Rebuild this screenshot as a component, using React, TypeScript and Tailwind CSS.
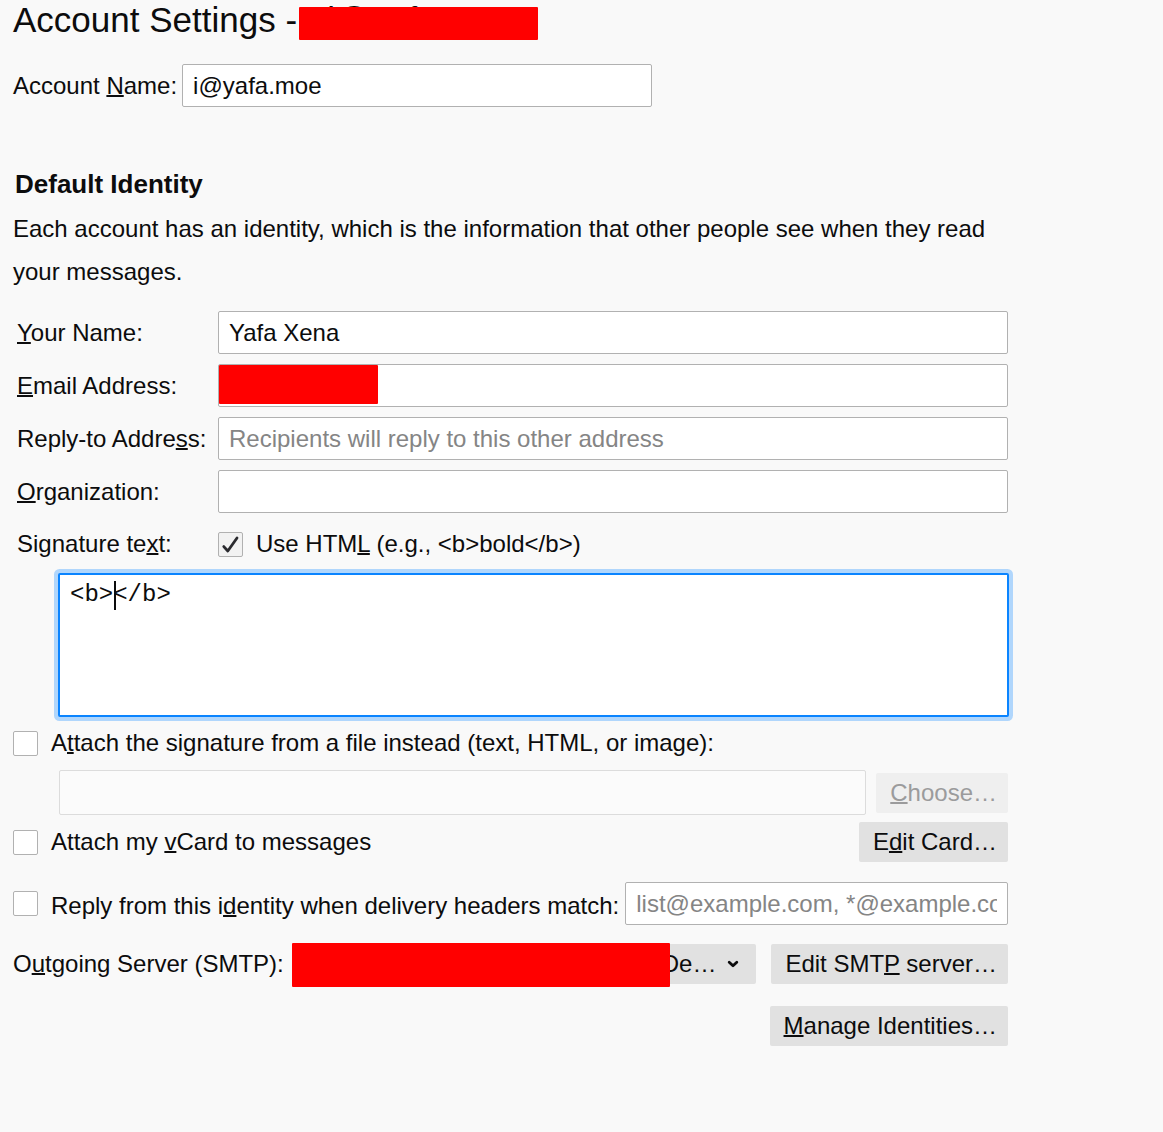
import { useRef, useEffect, type ReactNode, type InputHTMLAttributes } from "react";

const field =
  "block h-[43px] min-w-0 rounded-[2px] border border-[#b1b1b1] bg-white px-2.5 text-[#0c0c0d] placeholder:text-[#858585] outline-none";
const button =
  "h-10 shrink-0 whitespace-nowrap rounded-[2px] bg-[#e1e1e1] pl-3.5 pr-[11px] text-[#0c0c0d] disabled:bg-[#efefef] disabled:text-[#9b9b9c]";

function Key({ children }: { children: ReactNode }) {
  return (
    <span className="underline decoration-2 underline-offset-1 [text-decoration-skip-ink:none]">
      {children}
    </span>
  );
}

function Check({ className = "", ...props }: InputHTMLAttributes<HTMLInputElement>) {
  return (
    <span className={`relative block size-[25px] shrink-0 ${className}`}>
      <input
        type="checkbox"
        className="peer block size-[25px] appearance-none rounded-[2px] border border-[#b1b1b1] bg-white checked:bg-[#f2f2f2]"
        {...props}
      />
      <svg
        viewBox="0 0 25 25"
        className="pointer-events-none absolute inset-0 hidden size-[25px] peer-checked:block"
        fill="none"
        stroke="#2a2a2e"
        strokeWidth="2.8"
        strokeLinecap="round"
        strokeLinejoin="round"
      >
        <path d="M5.8 14.6 L9.8 19 L19 6" />
      </svg>
    </span>
  );
}

export default function App() {
  const signature = useRef<HTMLTextAreaElement>(null);
  useEffect(() => {
    signature.current?.setSelectionRange(3, 3);
  }, []);

  return (
    <main className="min-h-screen bg-[#f9f9f9] pl-[13px] pr-4 font-['Liberation_Sans',Arial,sans-serif] text-[24px] leading-[28px] text-[#0c0c0d]">
      <form className="w-full max-w-[995px]" onSubmit={(e) => e.preventDefault()}>
        <h1 className="relative h-10 whitespace-pre text-[35px] leading-10">
          Account Settings - &lt;i@yafa.moe&gt;
          <span className="absolute left-[286px] top-[7px] h-[33px] w-[239px] rounded-[1px] bg-[#ff0000]" />
        </h1>

        <div className="mt-6 flex items-center gap-[5px]">
          <label htmlFor="account">
            Account <Key>N</Key>ame:
          </label>
          <input id="account" className={`${field} w-[470px]`} defaultValue="i@yafa.moe" />
        </div>

        <h2 className="mt-[63px] pl-0.5 text-[26px] font-bold leading-7">Default Identity</h2>
        <p className="mt-[9px] leading-[43px]">
          Each account has an identity, which is the information that other people see when they read your
          messages.
        </p>

        <div className="mt-[18px] grid grid-cols-[201px_1fr] items-center gap-x-1 gap-y-2.5">
          <label htmlFor="name" className="pl-1">
            <Key>Y</Key>our Name:
          </label>
          <input id="name" className={`${field} w-full`} defaultValue="Yafa Xena" />

          <label htmlFor="email" className="pl-1">
            <Key>E</Key>mail Address:
          </label>
          <div className="relative">
            <input id="email" type="email" className={`${field} w-full`} />
            <span className="absolute left-px top-px h-[39px] w-[159px] rounded-[1px] bg-[#ff0000]" />
          </div>

          <label htmlFor="reply" className="whitespace-nowrap pl-1">
            Reply-to Addre<Key>s</Key>s:
          </label>
          <input
            id="reply"
            className={`${field} w-full`}
            placeholder="Recipients will reply to this other address"
          />

          <label htmlFor="org" className="pl-1">
            <Key>O</Key>rganization:
          </label>
          <input id="org" className={`${field} w-full`} />
        </div>

        <div className="mt-[17px] grid grid-cols-[201px_1fr] items-center gap-x-1">
          <label htmlFor="signature" className="pl-1">
            Signature te<Key>x</Key>t:
          </label>
          <div className="flex items-center gap-[13px]">
            <Check id="html" defaultChecked />
            <label htmlFor="html">
              Use HTM<Key>L</Key> (e.g., &lt;b&gt;bold&lt;/b&gt;)
            </label>
          </div>
        </div>

        <div className="relative -mr-px ml-[45px] mt-[15px]">
          <textarea
            id="signature"
            ref={signature}
            className="block h-36 w-full resize-none rounded-[2px] border-2 border-[#0a84ff] bg-white px-2.5 py-1.5 font-['Liberation_Mono','Courier_New',monospace] text-[24px] leading-[28px] shadow-[0_0_0_4px_#b0d6fc] outline-none"
            defaultValue="<b></b>"
          />
          <span className="absolute left-14 top-2 h-[29px] w-0.5 bg-[#0c0c0d]" />
        </div>

        <div className="mt-3 flex items-center gap-[13px]">
          <Check id="file" />
          <label htmlFor="file">
            A<Key>t</Key>tach the signature from a file instead (text, HTML, or image):
          </label>
        </div>

        <div className="ml-[46px] mt-[13px] flex items-center gap-2.5">
          <input
            aria-label="Signature file"
            disabled
            className="block h-[45px] min-w-0 flex-1 rounded-[2px] border border-[#dcdcdc] bg-[#fbfbfb] px-2.5"
          />
          <button type="button" disabled className={button}>
            <Key>C</Key>hoose…
          </button>
        </div>

        <div className="mt-[7px] flex items-center gap-[13px]">
          <Check id="vcard" />
          <label htmlFor="vcard" className="flex-1">
            Attach my <Key>v</Key>Card to messages
          </label>
          <button type="button" className={button}>
            E<Key>d</Key>it Card…
          </button>
        </div>

        <div className="mt-5 flex items-center">
          <Check id="match" />
          <label htmlFor="match" className="ml-[13px] mr-1.5 whitespace-nowrap pt-1">
            Reply from this i<Key>d</Key>entity when delivery headers match:
          </label>
          <input
            aria-label="Delivery header addresses"
            className={`${field} flex-1`}
            placeholder="list@example.com, *@example.com"
          />
        </div>

        <div className="mt-[19px] flex items-center">
          <label htmlFor="smtp" className="mr-2 whitespace-nowrap">
            O<Key>u</Key>tgoing Server (SMTP):
          </label>
          <div className="relative mr-[15px] min-w-0 flex-1">
            <select
              id="smtp"
              className="block h-10 w-full appearance-none rounded-[2px] bg-[#e1e1e1] pl-[370px] pr-9 text-[#0c0c0d] outline-none"
            >
              <option>De…</option>
            </select>
            <svg
              viewBox="0 0 12 8"
              className="pointer-events-none absolute right-[17px] top-4 h-2 w-3"
              fill="none"
              stroke="#0c0c0d"
              strokeWidth="2.8"
              strokeLinecap="round"
              strokeLinejoin="round"
            >
              <path d="M2.2 2.2 L6 5.8 L9.8 2.2" />
            </svg>
            <span className="absolute -top-px left-0 h-11 w-[378px] rounded-[1px] bg-[#ff0000]" />
          </div>
          <button type="button" className={button}>
            Edit SMT<Key>P</Key> server…
          </button>
        </div>

        <div className="mt-[22px] flex justify-end">
          <button type="button" className={button}>
            <Key>M</Key>anage Identities…
          </button>
        </div>
      </form>
    </main>
  );
}
